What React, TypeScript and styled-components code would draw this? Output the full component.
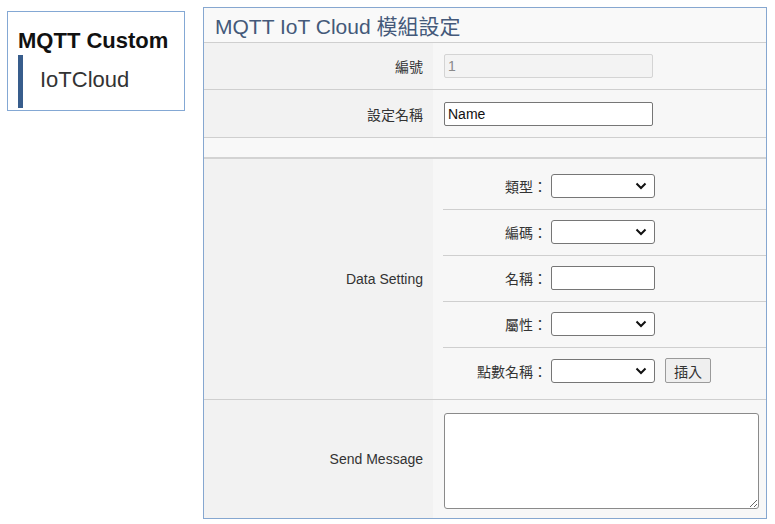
import React from 'react';
import styled, {createGlobalStyle} from "styled-components";

const GlobalStyle = createGlobalStyle`
  body {
    margin: 0;
    background: #fff;
    font-family: "Liberation Sans", "Noto Sans CJK TC", Arial, sans-serif;
    color: #333;
  }
`;

const Page = styled.div`
  display: flex;
  align-items: flex-start;
  gap: 18px;
  padding: 7px;
  width: 775px;
  height: 524px;
  box-sizing: border-box;
`;

const MenuBox = styled.div`
  margin-top: 4px;
  width: 178px;
  height: 100px;
  box-sizing: border-box;
  border: 1px solid #84a8d4;
  padding: 16px 0 0 10px;
  background: #fff;
`;

const MenuTitle = styled.div`
  font-family: "Liberation Sans", Arial, sans-serif;
  font-weight: bold;
  font-size: 22px;
  color: #111;
  line-height: 26px;
`;

const MenuItem = styled.div`
  margin-top: 1px;
  height: 53px;
  border-left: 5px solid #385d8c;
  padding-left: 17px;
  font-size: 22px;
  line-height: 50px;
  color: #333;
  box-sizing: border-box;
`;

const Panel = styled.div`
  width: 564px;
  height: 512px;
  box-sizing: border-box;
  border: 1px solid #86a7d0;
  background: #f7f7f7;
  display: flex;
  flex-direction: column;
`;

const Title = styled.div`
  height: 35px;
  box-sizing: border-box;
  padding-left: 11px;
  font-size: 21px;
  line-height: 38px;
  color: #44597a;
  background: #f9f9f9;
  border-bottom: 1px solid #cfcfcf;
  font-family: "Liberation Sans", "Noto Sans CJK TC", sans-serif;
`;

const Row = styled.div<{ $h: number; $thick?: boolean; $last?: boolean }>`
  display: grid;
  grid-template-columns: 229px 1fr;
  height: ${p => p.$h}px;
  box-sizing: border-box;
  border-bottom: ${p => p.$last ? 'none' : '1px solid #cfcfcf'};
`;

const EmptyRow = styled.div`
  height: 19px;
  background: #f8f8f8;
  border-bottom: 2px solid #d3d3d3;
`;

const Label = styled.div`
  background: #f2f2f2;
  display: flex;
  align-items: center;
  justify-content: flex-end;
  padding-right: 10px;
  font-size: 14px;
  color: #333;
`;

const Value = styled.div<{ $top?: boolean; $flush?: boolean }>`
  display: flex;
  align-items: ${p => p.$top ? 'flex-start' : 'center'};
  padding-left: ${p => p.$flush ? '0' : '11px'};
  padding-top: ${p => p.$top ? '13px' : '0'};
  background: #f7f7f7;
`;

const TextInput = styled.input`
  width: 209px;
  height: 24px;
  box-sizing: border-box;
  border: 1px solid #767676;
  border-radius: 2px;
  padding: 0 3px;
  font-family: "Liberation Sans", Arial, sans-serif;
  font-size: 14px;
  color: #111;
  background: #fff;
  &:disabled {
    background: #f3f3f3;
    border-color: #d4d4d4;
    color: #8a8a8a;
  }
`;

const Inner = styled.div`
  margin-left: 10px;
  padding: 5px 0;
  display: flex;
  flex-direction: column;
  flex: 1;
`;

const InnerRow = styled.div<{ $last?: boolean }>`
  display: grid;
  grid-template-columns: 104px auto;
  align-items: center;
  column-gap: 4px;
  height: 46px;
  box-sizing: border-box;
  border-bottom: ${p => p.$last ? 'none' : '1px solid #cfcfcf'};
  justify-content: start;
`;

const InnerLabel = styled.div`
  text-align: right;
  font-size: 14px;
  color: #333;
  font-family: "Noto Sans CJK TC", sans-serif;
`;

const Field = styled.div`
  display: flex;
  align-items: center;
  gap: 10px;
`;

const SelectWrap = styled.div`
  position: relative;
  width: 104px;
  height: 24px;
`;

const Select = styled.select`
  appearance: none;
  width: 104px;
  height: 24px;
  box-sizing: border-box;
  border: 1px solid #767676;
  border-radius: 3px;
  background: #fff;
  font-size: 14px;
`;

const Chevron = styled.svg`
  position: absolute;
  right: 8px;
  top: 8px;
  pointer-events: none;
`;

const SmallInput = styled(TextInput)`
  width: 104px;
`;

const Button = styled.button`
  height: 25px;
  padding: 0 8px;
  border: 1px solid #9a9a9a;
  border-radius: 2px;
  background: #efefef;
  font-family: "Noto Sans CJK TC", sans-serif;
  font-size: 14px;
  color: #333;
`;

const MessageBox = styled.textarea`
  width: 315px;
  height: 96px;
  box-sizing: border-box;
  border: 1px solid #8a8a8a;
  border-radius: 3px;
  background: #fff;
`;

const DropDown = () => (
  <SelectWrap>
    <Select><option></option></Select>
    <Chevron width="12" height="8" viewBox="0 0 12 8">
      <path d="M1.5 1.5 L6 6 L10.5 1.5" fill="none" stroke="#111" strokeWidth="2"/>
    </Chevron>
  </SelectWrap>
);

const dataFields = [
  {label: '類型：', kind: 'select'},
  {label: '編碼：', kind: 'select'},
  {label: '名稱：', kind: 'input'},
  {label: '屬性：', kind: 'select'},
  {label: '點數名稱：', kind: 'insert'},
];

const App = () => {
  return (
    <Page>
      <GlobalStyle/>
      <MenuBox>
        <MenuTitle>MQTT Custom</MenuTitle>
        <MenuItem>IoTCloud</MenuItem>
      </MenuBox>
      <Panel>
        <Title>MQTT IoT Cloud 模組設定</Title>
        <Row $h={48}>
          <Label>編號</Label>
          <Value><TextInput disabled defaultValue="1"/></Value>
        </Row>
        <Row $h={48}>
          <Label>設定名稱</Label>
          <Value><TextInput defaultValue="Name"/></Value>
        </Row>
        <EmptyRow/>
        <Row $h={241}>
          <Label>Data Setting</Label>
          <Value $flush>
            <Inner>
              {dataFields.map((f, i) => (
                <InnerRow key={f.label} $last={i === dataFields.length - 1}>
                  <InnerLabel>{f.label}</InnerLabel>
                  <Field>
                    {f.kind === 'input' ? <SmallInput/> : <DropDown/>}
                    {f.kind === 'insert' && <Button>插入</Button>}
                  </Field>
                </InnerRow>
              ))}
            </Inner>
          </Value>
        </Row>
        <Row $h={120} $last>
          <Label>Send Message</Label>
          <Value $top><MessageBox/></Value>
        </Row>
      </Panel>
    </Page>
  );
};

export default App;
